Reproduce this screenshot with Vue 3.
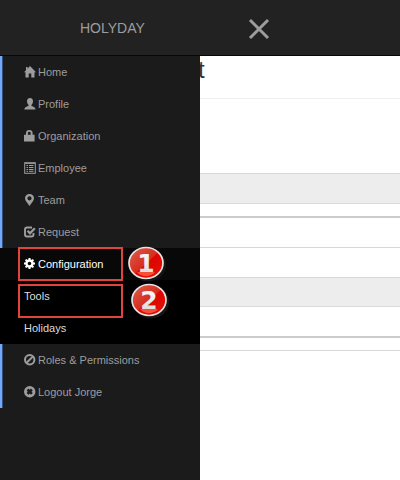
<script setup>
const items = [
  { label: 'Home', icon: 'home' },
  { label: 'Profile', icon: 'user' },
  { label: 'Organization', icon: 'lock' },
  { label: 'Employee', icon: 'list' },
  { label: 'Team', icon: 'pin' },
  { label: 'Request', icon: 'check' },
  { label: 'Configuration', icon: 'cog', open: true, mark: '1' },
  { label: 'Tools', sub: true, mark: '2' },
  { label: 'Holidays', sub: true },
  { label: 'Roles & Permissions', icon: 'ban' },
  { label: 'Logout Jorge', icon: 'remove' }
]
</script>

<template>
  <div class="page">
    <header class="topbar">
      <a class="brand" href="#">HOLYDAY</a>
      <button class="close" type="button" aria-label="Close menu">
        <svg viewBox="0 0 22 22"><path d="M2 2L20 20M20 2L2 20" fill="none" stroke="#9d9d9d" stroke-width="3" /></svg>
      </button>
    </header>
    <div class="body">
      <nav class="sidebar">
        <ul class="menu">
          <li v-for="item in items" :key="item.label" :class="['item', { open: item.open, sub: item.sub }]">
            <a href="#" class="link">
              <svg v-if="item.icon" class="icon" viewBox="0 0 12 12" fill="currentColor">
                <path v-if="item.icon === 'home'" d="M6 0L12 6.3H10.500V11.500H7.300V7.500H4.700V11.500H1.500V6.300H0L2 4.200V1H3.500V2.600Z" />
                <path v-else-if="item.icon === 'user'" d="M6 0C8 0 9 1.300 9 3.200C9 4.800 8.400 6 7.500 6.800V7.900C9.700 8.600 11.500 9.200 11.500 11.500H.3C.3 9.200 2.300 8.600 4.500 7.900V6.800C3.600 6 3 4.800 3 3.200C3 1.300 4 0 6 0Z" />
                <path v-else-if="item.icon === 'lock'" fill-rule="evenodd" d="M2 4.800V3.200Q2 0 5.300 0Q8.600 0 8.600 3.200V4.800H10.600V11.500H0V4.800ZM3.900 4.800H6.700V3.200Q6.700 1.800 5.300 1.800Q3.900 1.800 3.900 3.200Z" />
                <g v-else-if="item.icon === 'list'" fill="none" stroke="currentColor">
                  <rect x=".7" y=".7" width="10.600" height="10.600" />
                  <path d="M2.500 3.500H4M5 3.500H9.500M2.500 5.500H4M5 5.500H9.500M2.500 7.500H4M5 7.500H9.500M2.500 9.300H4M5 9.300H9.500M1 1.400H11" />
                </g>
                <path v-else-if="item.icon === 'pin'" fill-rule="evenodd" d="M5.500 0C8.200 0 10 1.800 10 4.300C10 6.800 7.200 9.500 5.500 12C3.800 9.500 1 6.800 1 4.300C1 1.800 2.800 0 5.500 0ZM5.500 2.200A2.100 2.100 0 1 0 5.500 6.400A2.100 2.100 0 1 0 5.500 2.200Z" />
                <g v-else-if="item.icon === 'check'" fill="none" stroke="currentColor">
                  <path d="M8 1.500H3Q1 1.500 1 3.500V8.500Q1 10.500 3 10.500H7.500Q9.500 10.500 9.500 8.500V7" stroke-width="1.900" />
                  <path d="M3.500 4.800L6 7.300L10.800 2.200" stroke-width="2.200" />
                </g>
                <g v-else-if="item.icon === 'cog'" fill="none" stroke="currentColor">
                  <circle cx="5.500" cy="5.500" r="3" stroke-width="2.400" />
                  <path d="M5.500 0V2M5.500 9V11M0 5.500H2M9 5.500H11M1.600 1.600L3 3M8 8L9.400 9.400M9.400 1.600L8 3M3 8L1.600 9.400" stroke-width="2" />
                </g>
                <g v-else-if="item.icon === 'ban'" fill="none" stroke="currentColor" stroke-width="2">
                  <circle cx="5.700" cy="5.700" r="4.700" />
                  <path d="M2.600 8.800L8.800 2.600" />
                </g>
                <g v-else>
                  <circle cx="5.700" cy="5.700" r="5.700" />
                  <path d="M3.500 3.500L7.900 7.900M7.900 3.500L3.500 7.900" stroke="#1b1b1b" stroke-width="2.600" />
                </g>
              </svg>
              <span>{{ item.label }}</span>
            </a>
            <span v-if="item.mark" :class="['frame', 'frame-' + item.mark]"></span>
            <svg v-if="item.mark" :class="['badge', 'badge-' + item.mark]" viewBox="0 0 38 36">
              <defs>
                <linearGradient :id="'red' + item.mark" x1="0" y1="0" x2="1" y2="1">
                  <stop offset="0" stop-color="#e0604d" />
                  <stop offset=".5" stop-color="#d42d20" />
                  <stop offset=".52" stop-color="#dc0500" />
                  <stop offset="1" stop-color="#e51208" />
                </linearGradient>
                <linearGradient :id="'silver' + item.mark" x1="0" y1="0" x2="0" y2="1">
                  <stop offset="0" stop-color="#fff" />
                  <stop offset="1" stop-color="#d8d4d4" />
                </linearGradient>
              </defs>
              <ellipse cx="20" cy="19" rx="18" ry="16.500" fill="#151515" />
              <ellipse cx="18" cy="17" rx="17" ry="15.500" :fill="'url(#red' + item.mark + ')'" stroke="#e8e2e2" stroke-width="1.700" />
              <path d="M9 26.500Q18 23 27 26.500Q18 34 9 26.500Z" fill="#ff6242" opacity=".8" />
              <text x="18" y="26" text-anchor="middle" class="digit" :fill="'url(#silver' + item.mark + ')'">{{ item.mark }}</text>
            </svg>
          </li>
        </ul>
      </nav>
      <main class="content">
        <h1 class="title">t</h1>
        <section class="panel first">
          <div class="strip"></div>
          <div class="row short"></div>
          <div class="row"></div>
        </section>
        <section class="panel second">
          <div class="strip"></div>
          <div class="row heavy"></div>
          <div class="row end"></div>
        </section>
      </main>
    </div>
  </div>
</template>

<style>
body { margin: 0; }
</style>

<style scoped>
.page {
  min-height: 100vh;
  display: flex;
  flex-direction: column;
  background: #fff;
  font-family: "Liberation Sans", Arial, sans-serif;
}
.topbar {
  height: 55px;
  display: flex;
  align-items: center;
  background: #222;
  border-bottom: 1px solid #080808;
}
.brand {
  width: 168px;
  padding-left: 80px;
  font-size: 14px;
  color: #9d9d9d;
  text-decoration: none;
}
.close {
  display: flex;
  margin-top: 3px;
  padding: 0;
  border: 0;
  background: none;
}
.close svg { width: 22px; height: 22px; }
.body { flex: 1; display: flex; }
.sidebar {
  width: 200px;
  flex: none;
  background: #1b1b1b;
}
.menu { margin: 0; padding: 0; list-style: none; }
.item {
  position: relative;
  height: 32px;
  box-sizing: border-box;
  border-left: 2px solid #73a8fb;
  box-shadow: inset 1px 0 #34507a;
}
.item.open { background: #080808; border-color: #080808; box-shadow: none; }
.item.sub { background: #000; border-color: #000; box-shadow: none; }
.link {
  display: flex;
  align-items: center;
  gap: 2px;
  height: 32px;
  padding-left: 22px;
  font-size: 11px;
  color: #9d9d9d;
  text-decoration: none;
}
.open .link { color: #fff; }
.sub .link { color: #ddd; }
.icon { width: 12px; height: 12px; }
.frame {
  position: absolute;
  left: 16px;
  width: 105px;
  height: 34px;
  box-sizing: border-box;
  border: 2px solid #e0443c;
  z-index: 1;
}
.frame-1 { top: -1px; }
.frame-2 { top: 4px; }
.badge {
  position: absolute;
  width: 38px;
  height: 36px;
  z-index: 2;
}
.badge-1 { left: 126px; top: -2px; }
.badge-2 { left: 129px; top: 3px; }
.digit {
  font-family: "DejaVu Sans", sans-serif;
  font-size: 25px;
  font-weight: 700;
}
.content { flex: 1; min-width: 0; overflow: hidden; }
.title {
  height: 42px;
  margin: 0;
  line-height: 28px;
  font-size: 24px;
  font-weight: 400;
  text-indent: -2px;
  color: #333;
  border-bottom: 1px solid #eee;
}
.first { margin-top: 74px; }
.strip {
  height: 29px;
  background: #ededed;
  border-top: 1px solid #d8d8d8;
  border-bottom: 1px solid #dadada;
}
.row { height: 28px; border-bottom: 1px solid #d8d8d8; }
.row.short { height: 12px; border-bottom: 2px solid #ccc; }
.row.end { height: 12px; }
.row.heavy { height: 29px; border-bottom: 2px solid #ccc; }
.first .row:last-child { height: 29px; }
.second { margin-top: 29px; }
.second .strip { height: 28px; }
</style>
